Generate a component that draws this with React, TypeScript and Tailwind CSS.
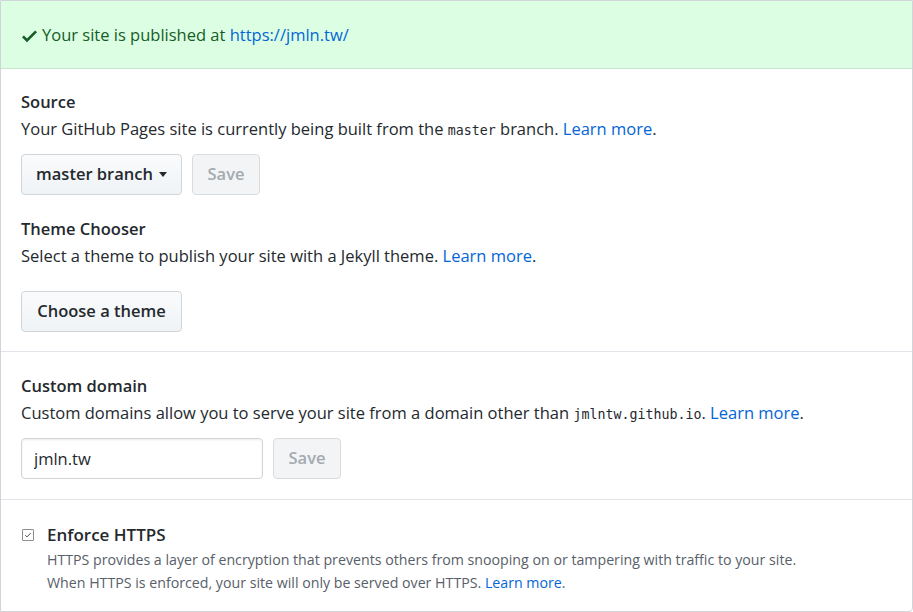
import type { FC, ReactNode } from "react";

const font = "font-['Open_Sans','Noto_Sans',sans-serif]";
const mono = "font-['DejaVu_Sans_Mono','Liberation_Mono',monospace]";

const LearnMore: FC = () => (
  <a href="#" className="text-[#0366d6]">
    Learn more
  </a>
);

const Btn: FC<{ children: ReactNode; disabled?: boolean; className?: string }> = ({
  children,
  disabled,
  className,
}) => (
  <button
    className={
      "h-[41px] rounded-[4px] border text-[16.5px] font-semibold flex items-center justify-center whitespace-nowrap " +
      (disabled
        ? "bg-[#f3f4f6] border-[#d9dcdf] text-[#a3aab1]"
        : "bg-gradient-to-b from-[#fafbfc] to-[#eff3f6] border-[#d1d5da] text-[#24292e]") +
      (className ? " " + className : "")
    }
  >
    {children}
  </button>
);

const Title: FC<{ children: ReactNode }> = ({ children }) => (
  <h3 className="text-[16.5px] leading-[27px] font-semibold text-[#24292e]">{children}</h3>
);

const Desc: FC<{ children: ReactNode }> = ({ children }) => (
  <p className="text-[16.5px] leading-[27px] text-[#24292e]">{children}</p>
);

export default function App() {
  return (
    <div className={`${font} w-[913px] h-[612px] bg-white`}>
      <div className="h-full border border-[#d1d5da] rounded-br-[4px] overflow-hidden">
        <div className="h-[68px] bg-[#dcffe4] border-b border-[#c9e6d0] flex items-center pl-[21px] pt-[2px] text-[16.5px] text-[#165c26]">
          <svg viewBox="0 0 12 16" width="15" height="20" className="mr-[5px] fill-[#165c26]">
            <path d="M12 5l-8 8-4-4 1.5-1.5L4 10l6.5-6.5L12 5z" />
          </svg>
          <span>
            Your site is published at <a href="#" className="text-[#0366d6]">https://jmln.tw/</a>
          </span>
        </div>

        <div className="px-[20px] pt-[19px] pb-[19px] border-b border-[#e1e4e8]">
          <Title>Source</Title>
          <Desc>
            Your GitHub Pages site is currently being built from the{" "}
            <code className={`${mono} text-[13.3px]`}>master</code> branch. <LearnMore />.
          </Desc>
          <div className="flex gap-[10px] mt-[10px]">
            <Btn className="w-[161px]">
              master branch
              <span className="ml-[6px] border-x-[4.5px] border-x-transparent border-t-[5px] border-t-[#24292e]" />
            </Btn>
            <Btn disabled className="w-[68px]">
              Save
            </Btn>
          </div>

          <div className="mt-[20px]">
            <Title>Theme Chooser</Title>
            <Desc>
              Select a theme to publish your site with a Jekyll theme. <LearnMore />.
            </Desc>
            <Btn className="mt-[22px] w-[161px]">Choose a theme</Btn>
          </div>
        </div>

        <div className="px-[20px] pt-[20px] pb-[20px] border-b border-[#e1e4e8]">
          <Title>Custom domain</Title>
          <Desc>
            Custom domains allow you to serve your site from a domain other than{" "}
            <code className={`${mono} text-[13.3px]`}>jmlntw.github.io</code>. <LearnMore />.
          </Desc>
          <div className="flex gap-[10px] mt-[10px]">
            <input
              defaultValue="jmln.tw"
              className="w-[242px] h-[41px] px-[12px] rounded-[4px] border border-[#d1d5da] text-[16.5px] text-[#24292e] shadow-[inset_0_1px_2px_rgba(27,31,35,0.075)] outline-none"
            />
            <Btn disabled className="w-[68px]">
              Save
            </Btn>
          </div>
        </div>

        <div className="px-[20px] pt-[21px]">
          <div className="flex items-center">
            <span className="w-[12px] h-[12px] border border-[#8a8f94] rounded-[1px] flex items-center justify-center mr-[13px] ml-[1px] bg-white">
              <svg viewBox="0 0 10 10" width="8" height="8">
                <path d="M1.5 5.2l2.2 2.2L8.5 2.5" fill="none" stroke="#444" strokeWidth="1.2" />
              </svg>
            </span>
            <span className="text-[17px] leading-[27px] font-semibold text-[#24292e]">Enforce HTTPS</span>
          </div>
          <p className="pl-[26px] text-[14.2px] leading-[23px] text-[#586069]">
            HTTPS provides a layer of encryption that prevents others from snooping on or tampering with
            traffic to your site.
            <br />
            When HTTPS is enforced, your site will only be served over HTTPS. <LearnMore />.
          </p>
        </div>
      </div>
    </div>
  );
}
